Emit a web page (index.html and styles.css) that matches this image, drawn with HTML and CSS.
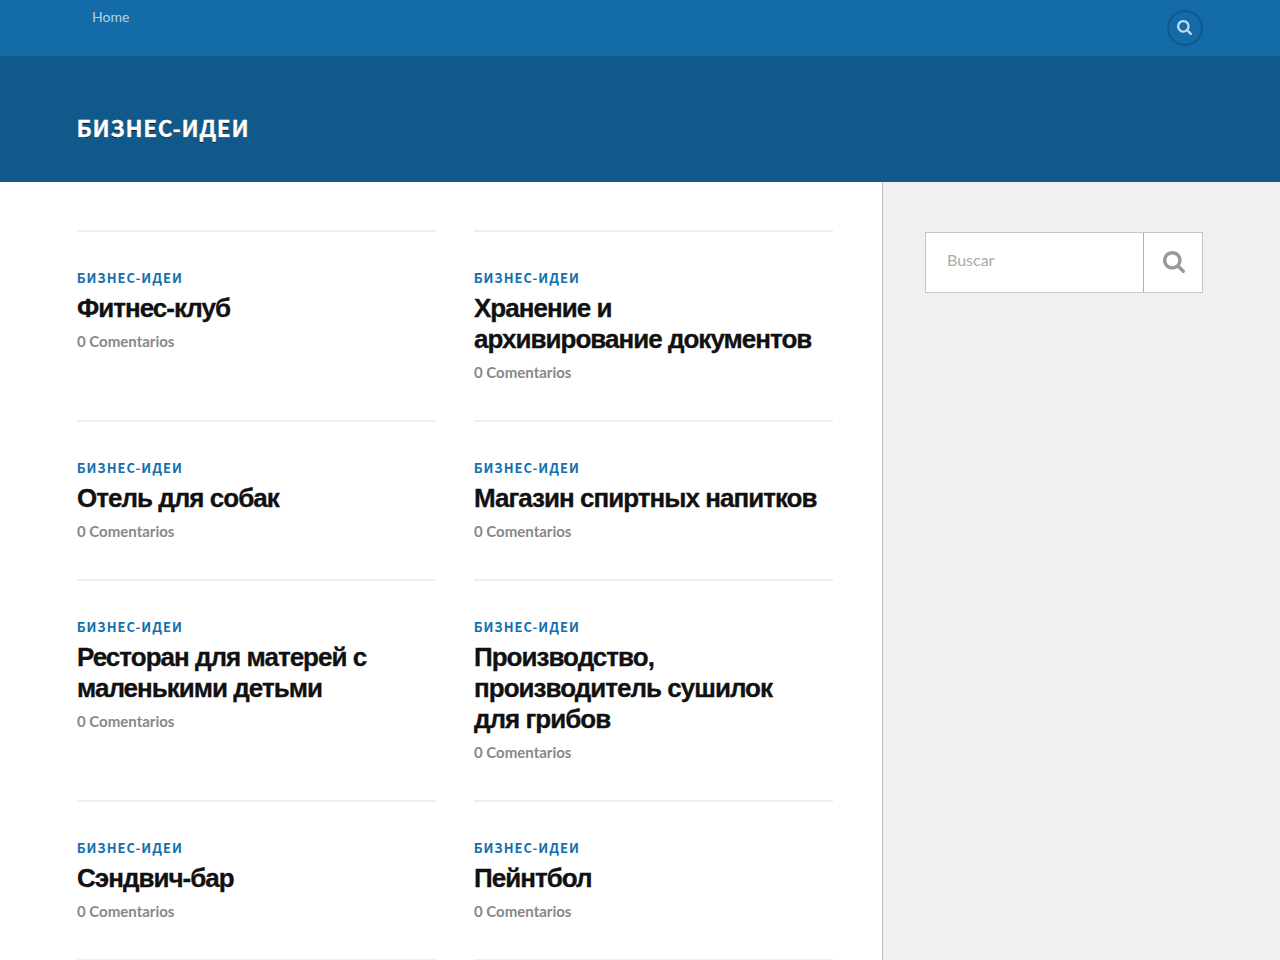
FILE: index.html
```html
<!DOCTYPE html>
<html lang="es">

<head>
    <meta charset="UTF-8">
    <meta name="viewport" content="width=device-width, initial-scale=1.0">
    <title>Бизнес-идеи</title>
    <link rel="stylesheet" href="styles.css">
</head>

<body>
    <nav class="navigation">
        <div class="section-inner">
            <ul class="main-menu">
                <li><a href="#">Home</a></li>
            </ul>
            <a class="search-toggle" href="#" aria-label="Buscar">
                <svg viewBox="0 0 1664 1664"><path d="M1152 704q0-185-131.500-316.500T704 256 387.500 387.500 256 704t131.500 316.500T704 1152t316.500-131.500T1152 704zm512 832q0 52-38 90t-90 38q-54 0-90-38l-343-342q-179 124-399 124-143 0-273.500-55.500t-225-150-150-225T0 704t55.500-273.500 150-225 225-150T704 0t273.500 55.500 225 150 150 225T1408 704q0 220-124 399l343 343q37 37 37 90z"/></svg>
            </a>
        </div>
    </nav>

    <header class="header">
        <div class="section-inner">
            <h2 class="blog-title"><a href="#">Бизнес-идеи</a></h2>
        </div>
    </header>

    <div class="wrapper">
        <main class="content">
            <div class="posts">
                <article class="post">
                    <p class="post-categories"><a href="#">Бизнес-идеи</a></p>
                    <h2 class="post-title"><a href="#">Фитнес-клуб</a></h2>
                    <p class="post-meta"><a href="#">0 Comentarios</a></p>
                </article>
                <article class="post">
                    <p class="post-categories"><a href="#">Бизнес-идеи</a></p>
                    <h2 class="post-title"><a href="#">Хранение и архивирование&nbsp;документов</a></h2>
                    <p class="post-meta"><a href="#">0 Comentarios</a></p>
                </article>
                <article class="post">
                    <p class="post-categories"><a href="#">Бизнес-идеи</a></p>
                    <h2 class="post-title"><a href="#">Отель для собак</a></h2>
                    <p class="post-meta"><a href="#">0 Comentarios</a></p>
                </article>
                <article class="post">
                    <p class="post-categories"><a href="#">Бизнес-идеи</a></p>
                    <h2 class="post-title"><a href="#">Магазин спиртных напитков</a></h2>
                    <p class="post-meta"><a href="#">0 Comentarios</a></p>
                </article>
                <article class="post">
                    <p class="post-categories"><a href="#">Бизнес-идеи</a></p>
                    <h2 class="post-title"><a href="#">Ресторан для матерей с маленькими детьми</a></h2>
                    <p class="post-meta"><a href="#">0 Comentarios</a></p>
                </article>
                <article class="post">
                    <p class="post-categories"><a href="#">Бизнес-идеи</a></p>
                    <h2 class="post-title"><a href="#">Производство, производитель сушилок для&nbsp;грибов</a></h2>
                    <p class="post-meta"><a href="#">0 Comentarios</a></p>
                </article>
                <article class="post">
                    <p class="post-categories"><a href="#">Бизнес-идеи</a></p>
                    <h2 class="post-title"><a href="#">Сэндвич-бар</a></h2>
                    <p class="post-meta"><a href="#">0 Comentarios</a></p>
                </article>
                <article class="post">
                    <p class="post-categories"><a href="#">Бизнес-идеи</a></p>
                    <h2 class="post-title"><a href="#">Пейнтбол</a></h2>
                    <p class="post-meta"><a href="#">0 Comentarios</a></p>
                </article>
            </div>
            <div class="posts-end">
                <hr>
                <hr>
            </div>
        </main>

        <aside class="sidebar">
            <form class="search-form">
                <input class="search-field" type="search" placeholder="Buscar" name="s">
                <button class="search-button" type="submit" aria-label="Buscar">
                    <svg viewBox="0 0 1664 1664"><path d="M1152 704q0-185-131.500-316.500T704 256 387.500 387.500 256 704t131.500 316.500T704 1152t316.500-131.500T1152 704zm512 832q0 52-38 90t-90 38q-54 0-90-38l-343-342q-179 124-399 124-143 0-273.500-55.500t-225-150-150-225T0 704t55.500-273.500 150-225 225-150T704 0t273.500 55.500 225 150 150 225T1408 704q0 220-124 399l343 343q37 37 37 90z"/></svg>
                </button>
            </form>
        </aside>
    </div>
</body>

</html>
```
FILE: styles.css
```css
* {
    box-sizing: border-box;
    margin: 0;
    padding: 0;
}

body {
    background: #fff;
    color: #111;
    font-family: Lato, "Noto Sans", sans-serif;
}

a {
    color: inherit;
    text-decoration: none;
}

svg {
    display: block;
    fill: currentColor;
}

.section-inner {
    display: flex;
    justify-content: space-between;
    width: 1126px;
    margin: 0 auto;
}

.navigation {
    height: 56px;
    background: #136ca8;
}

.main-menu {
    padding: 8px 15px;
    list-style: none;
    color: rgba(255, 255, 255, 0.7);
    font-size: 14px;
    line-height: 17px;
}

.search-toggle {
    display: flex;
    align-items: center;
    justify-content: center;
    width: 36px;
    height: 36px;
    margin-top: 10px;
    padding: 0 1px 1px 0;
    border: 2px solid #105a8b;
    border-radius: 50%;
    color: rgba(255, 255, 255, 0.75);
}

.search-toggle svg {
    width: 15px;
    height: 15px;
}

.header {
    height: 126px;
    padding-top: 57px;
    background: #105a8b;
}

.blog-title {
    margin-left: -0.5px;
    color: #fff;
    font-family: "Noto Sans CJK SC", sans-serif;
    font-size: 22.5px;
    font-weight: 700;
    line-height: 28px;
    letter-spacing: 0.75px;
    text-transform: uppercase;
    text-shadow: 0 1px 0 #111;
    -webkit-text-stroke: 0.3px #fff;
}

.wrapper {
    display: flex;
    height: 778px;
}

.content {
    width: 882px;
    padding: 48px 49px 0 77px;
}

.posts,
.posts-end {
    display: grid;
    grid-template-columns: 359px 359px;
    column-gap: 38px;
}

.posts-end hr {
    height: 1px;
    border: none;
    background: #eee;
}

.post {
    padding: 38px 0 39px;
    border-top: 2px solid #eee;
}

.post-categories {
    margin-left: -0.3px;
    color: #136fac;
    font-family: "Noto Sans CJK SC", sans-serif;
    font-size: 13px;
    font-weight: 700;
    line-height: 16px;
    letter-spacing: 1px;
    text-transform: uppercase;
}

.post-title {
    margin-top: 7px;
    font-family: "Liberation Sans", Arial, sans-serif;
    font-size: 26px;
    font-weight: 700;
    line-height: 31px;
    letter-spacing: -0.98px;
    -webkit-text-stroke: 0.3px #111;
}

.post-meta {
    margin-top: 8px;
    color: #888;
    font-size: 15px;
    font-weight: 700;
    line-height: 18px;
}

.sidebar {
    flex: 1;
    min-width: 0;
    padding: 50px 77px 0 42px;
    border-left: 1px solid #bbb;
    background: #f0f0f0;
}

.search-form {
    display: flex;
    height: 61px;
    border: 1px solid #c6c6c6;
    background: #fff;
}

.search-field {
    flex: 1;
    min-width: 0;
    padding: 0 21px 6px;
    border: none;
    background: none;
    font-family: Lato, sans-serif;
    font-size: 16px;
}

.search-field::placeholder {
    color: #aaa;
}

.search-button {
    display: flex;
    align-items: center;
    justify-content: center;
    width: 59px;
    padding: 0 0 2px 2px;
    border: none;
    border-left: 1px solid #b0b0b0;
    background: none;
    color: #999;
}

.search-button svg {
    width: 22px;
    height: 22px;
}
```
